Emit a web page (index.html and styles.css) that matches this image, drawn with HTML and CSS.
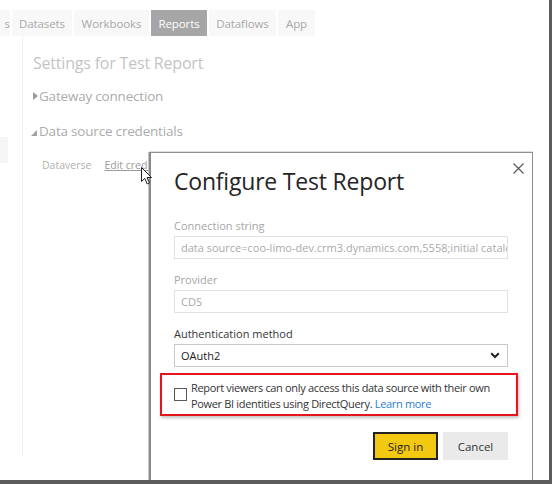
FILE: index.html
```html
<!DOCTYPE html>
<html>
<head>
<meta charset="utf-8">
<link rel="stylesheet" href="styles.css">
</head>
<body>
<div class="screen">
  <nav class="tabs">
    <span class="tab tab-cut">s</span>
    <span class="tab w-datasets">Datasets</span>
    <span class="tab w-workbooks">Workbooks</span>
    <span class="tab active w-reports">Reports</span>
    <span class="tab w-dataflows">Dataflows</span>
    <span class="tab w-app">App</span>
  </nav>
  <div class="page">
    <div class="side-stub"></div>
    <div class="settings">
      <h1 class="settings-title">Settings for Test Report</h1>
      <div class="section"><span class="tri-right"></span>Gateway connection</div>
      <div class="section section-open"><span class="tri-open"></span>Data source credentials</div>
      <div class="cred-row"><span class="cred-name">Dataverse</span><span class="cred-link">Edit crede</span></div>
    </div>
  </div>

  <svg class="cursor" width="12" height="18" viewBox="0 0 12 18">
    <path d="M0.5 0.5 L0.5 14.5 L3.8 11.4 L6.2 17 L8.4 16 L6 10.5 L10.5 10.5 Z" fill="#fff" stroke="#222" stroke-width="1"/>
  </svg>

  <div class="dialog">
    <button class="close" aria-label="Close">
      <svg width="11" height="11" viewBox="0 0 11 11"><path d="M0.5 0.5 L10.5 10.5 M10.5 0.5 L0.5 10.5" stroke="#555" stroke-width="1.1"/></svg>
    </button>
    <h2 class="dialog-title">Configure Test Report</h2>
    <div class="field first">
      <label class="label muted">Connection string</label>
      <div class="input disabled">data source=coo-limo-dev.crm3.dynamics.com,5558;initial catalog=</div>
    </div>
    <div class="field">
      <label class="label muted">Provider</label>
      <div class="input disabled">CDS</div>
    </div>
    <div class="field">
      <label class="label">Authentication method</label>
      <div class="input select">
        <span>OAuth2</span>
        <svg width="10" height="7" viewBox="0 0 10 7"><path d="M1.2 1.3 L5 5 L8.8 1.3" fill="none" stroke="#222" stroke-width="2"/></svg>
      </div>
    </div>
    <div class="highlight">
      <span class="checkbox"></span>
      <p class="check-text">Report viewers can only access this data source with their own Power BI identities using DirectQuery. <a class="link">Learn more</a></p>
    </div>
    <div class="actions">
      <button class="btn primary">Sign in</button>
      <button class="btn secondary">Cancel</button>
    </div>
  </div>
</div>
</body>
</html>
```

FILE: styles.css
```css
* { box-sizing: border-box; }
html, body { margin: 0; padding: 0; background: #fff; }
body { font-family: "Open Sans", "Noto Sans", sans-serif; }

.screen {
  position: relative;
  width: 552px;
  height: 484px;
  overflow: hidden;
  background: #fff;
  border-right: 3px solid #5c5c5c;
  border-bottom: 4px solid #5c5c5c;
}

.tabs {
  display: flex;
  gap: 2px;
  margin-top: 10px;
  height: 26px;
}
.tab {
  display: flex;
  align-items: center;
  justify-content: center;
  background: #f8f8f8;
  color: #a8a8a8;
  font-size: 11.5px;
  letter-spacing: -0.1px;
  height: 26px;
  white-space: nowrap;
}
.tab-cut { width: 10px; justify-content: flex-end; }
.w-datasets { width: 60px; }
.w-workbooks { width: 75px; }
.w-reports { width: 56px; }
.w-dataflows { width: 67px; }
.w-app { width: 37px; }
.tab.active { background: #a6a6a6; color: #fff; }

.page { display: flex; }
.side-stub {
  width: 8px;
  height: 26px;
  margin-top: 101px;
  background: #f5f5f5;
}
.settings {
  margin-left: 14px;
  padding-left: 10px;
  border-left: 1px solid #f2f2f2;
  height: 420px;
  padding-top: 15px;
}
.settings-title {
  margin: 0;
  font-weight: 400;
  font-size: 16px;
  letter-spacing: -0.2px;
  line-height: 24px;
  color: #c4c4c4;
}
.section {
  display: flex;
  align-items: center;
  font-size: 13.5px;
  letter-spacing: -0.2px;
  line-height: 20px;
  color: #acacac;
  margin-top: 11px;
}
.section-open { margin-top: 15px; }
.tri-right {
  width: 0; height: 0;
  border-top: 4px solid transparent;
  border-bottom: 4px solid transparent;
  border-left: 5px solid #9a9a9a;
  margin-right: 1px;
}
.tri-open {
  width: 0; height: 0;
  border-left: 6px solid transparent;
  border-bottom: 6px solid #a0a0a0;
  margin: 3px 2px 0 -2px;
}
.cred-row {
  display: flex;
  gap: 13px;
  margin-top: 17px;
  padding-left: 9px;
  font-size: 10.5px;
  color: #b0b0b0;
  white-space: nowrap;
}
.cred-link { text-decoration: underline; color: #9a9a9a; }

.cursor { position: absolute; left: 141px; top: 167px; z-index: 3; }

.dialog {
  position: absolute;
  left: 149px;
  top: 152px;
  width: 384px;
  height: 360px;
  background: #fff;
  border-top: 1px solid #8e8e8e;
  border-right: 1px solid #8e8e8e;
  border-left: 2px solid #8a8a8a;
  box-shadow: -1px 0 0 #c8c8c8, 0 -1px 0 #e0e0e0;
  padding: 0 24px 0 23px;
  z-index: 2;
}
.close {
  position: absolute;
  right: 8px;
  top: 10px;
  border: 0;
  background: none;
  padding: 0;
  width: 11px;
  height: 11px;
  display: block;
}
.close svg { display: block; }
.dialog-title {
  margin: 12px 0 0;
  font-weight: 400;
  font-size: 23px;
  letter-spacing: -0.2px;
  line-height: 32px;
  color: #252525;
}
.field { margin-top: 13px; }
.field.first { margin-top: 21px; }
.label {
  display: block;
  font-size: 11px;
  line-height: 16px;
  color: #333;
  margin-bottom: 2px;
}
.label.muted { color: #a6a6a6; }
.input {
  height: 23px;
  border: 1px solid #e1e1e1;
  font-size: 11px;
  line-height: 21px;
  padding: 0 6px;
  color: #aaa;
  white-space: nowrap;
  overflow: hidden;
}
.select {
  display: flex;
  align-items: center;
  justify-content: space-between;
  color: #222;
  border-color: #c8c8c8;
  padding-right: 7px;
}
.highlight {
  display: flex;
  align-items: flex-start;
  gap: 4px;
  margin: 6px -10px 0 -14px;
  padding: 5px 8px 2px 12px;
  border: 2px solid #e8141b;
  box-shadow: 1px 2px 3px rgba(0,0,0,0.25);
  height: 43px;
}
.checkbox {
  flex: none;
  width: 13px;
  height: 13px;
  border: 1px solid #5a5a5a;
  margin-top: 8px;
}
.check-text {
  margin: 0;
  font-size: 11px;
  letter-spacing: -0.33px;
  line-height: 16px;
  color: #333;
}
.link { color: #2b7cd3; }
.actions {
  display: flex;
  justify-content: flex-end;
  gap: 5px;
  margin-top: 16px;
}
.btn {
  width: 65px;
  height: 28px;
  font-family: inherit;
  font-size: 11.5px;
  padding: 0;
}
.primary { background: #f2c811; border: 2px solid #222; color: #222; }
.secondary { background: #eaeaea; border: 0; color: #333; }
```
